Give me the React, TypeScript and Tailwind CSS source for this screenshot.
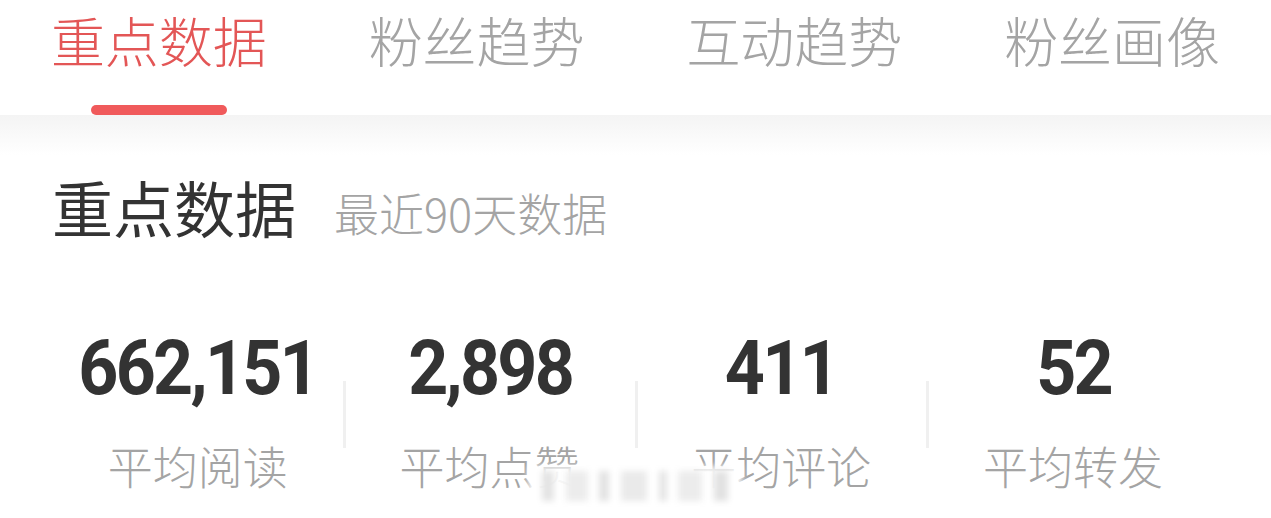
import React from "react";

const tabs = ["重点数据", "粉丝趋势", "互动趋势", "粉丝画像"];
const stats = [
  { v: "662,151", l: "平均阅读" },
  { v: "2,898", l: "平均点赞" },
  { v: "411", l: "平均评论" },
  { v: "52", l: "平均转发" },
];

const cjk = { fontFamily: '"Noto Sans CJK SC", "Noto Sans", sans-serif' };
const num = { fontFamily: 'Roboto, "Liberation Sans", sans-serif' };

export default function App() {
  return (
    <div className="w-[1271px] h-[518px] bg-white overflow-hidden relative font-light" style={cjk}>
      <div className="grid grid-cols-4 h-[115px]">
        {tabs.map((t, i) => (
          <div key={t} className="flex flex-col items-center">
            <div
              className={`mt-[10px] text-[54px] leading-[60px] ${i === 0 ? "text-[#e35656]" : "text-[#a4a4a4]"}`}
            >
              {t}
            </div>
            {i === 0 && <div className="mt-[35px] w-[136px] h-[10px] rounded-full bg-[#f05a5b]" />}
          </div>
        ))}
      </div>
      <div className="h-[40px] bg-gradient-to-b from-[#f4f4f4] to-white" />
      <div className="px-[52px]">
        <div className="flex items-end mt-[17px]">
          <div className="text-[61px] leading-[70px] text-[#333333] font-normal">重点数据</div>
          <div className="ml-[38px] mb-[1px] text-[45px] leading-[56px] text-[#a4a4a4]">最近90天数据</div>
        </div>
        <div className="grid grid-cols-4 mt-[86px]">
          {stats.map((s, i) => (
            <div key={s.l} className="relative flex flex-col items-center">
              {i > 0 && <div className="absolute left-[-1px] top-[53px] w-[3px] h-[67px] bg-[#f0f0f0]" />}
              <div
                className="text-[76px] leading-[80px] font-bold text-[#333333] tracking-[-3px] scale-x-[0.92]"
                style={num}
              >
                {s.v}
              </div>
              <div className="mt-[30px] text-[45px] leading-[56px] text-[#a4a4a4]">{s.l}</div>
            </div>
          ))}
        </div>
      </div>
      <div className="absolute left-[528px] top-[466px] w-[214px] h-[40px] bg-white/90 blur-[3px] flex items-center justify-around px-2">
        <div className="w-[12px] h-[30px] bg-[#e4e4e4]" />
        <div className="w-[22px] h-[30px] bg-[#ececec]" />
        <div className="w-[10px] h-[30px] bg-[#e2e2e2]" />
        <div className="w-[26px] h-[30px] bg-[#eaeaea]" />
        <div className="w-[8px] h-[30px] bg-[#e4e4e4]" />
        <div className="w-[24px] h-[30px] bg-[#ececec]" />
        <div className="w-[14px] h-[30px] bg-[#e2e2e2]" />
      </div>
    </div>
  );
}
